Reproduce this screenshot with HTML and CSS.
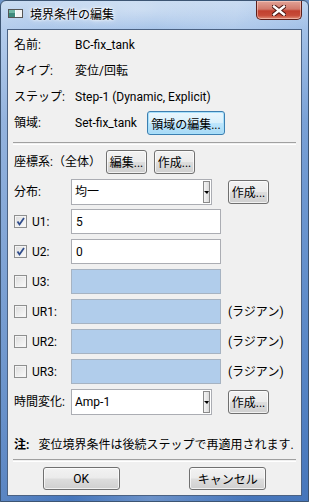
FILE: index.html
```html
<!DOCTYPE html>
<html>
<head>
  <title>境界条件の編集</title>
  <link rel="stylesheet" href="styles.css">
</head>
<body>
  <div class="window">
    <div class="titlebar">
      <svg class="app-icon" width="15" height="9" viewBox="0 0 15 9">
        <rect x="0.5" y="0.5" width="14" height="8" fill="#fff" stroke="#555"/>
        <rect x="1" y="1" width="6" height="7" fill="#3f8a7c"/>
        <rect x="1" y="1" width="6" height="3" fill="#6fb7a4"/>
        <rect x="8" y="1" width="6" height="7" fill="#f4f4f4"/>
      </svg>
      <span class="title">境界条件の編集</span>
      <div class="close-btn">
        <svg width="14" height="11" viewBox="0 0 14 11">
          <path d="M2 1.5 L12 9.5 M12 1.5 L2 9.5" stroke="#4a1612" stroke-width="4.4" stroke-linecap="square"/>
          <path d="M2 1.5 L12 9.5 M12 1.5 L2 9.5" stroke="#fff" stroke-width="2.4" stroke-linecap="square"/>
        </svg>
      </div>
    </div>

    <div class="client">
      <div class="info">
        <div class="info-row"><span class="info-label">名前:</span><span class="info-value">BC-fix_tank</span></div>
        <div class="info-row"><span class="info-label">タイプ:</span><span class="info-value">変位/回転</span></div>
        <div class="info-row"><span class="info-label">ステップ:</span><span class="info-value">Step-1 (Dynamic, Explicit)</span></div>
        <div class="info-row">
          <span class="info-label">領域:</span><span class="info-value">Set-fix_tank</span>
          <button class="btn btn-focus region-btn">領域の編集...</button>
        </div>
      </div>

      <div class="sep"></div>

      <div class="form">
        <div class="row">
          <span class="csys-label">座標系:（全体）</span>
          <button class="btn btn-small">編集...</button>
          <button class="btn btn-small csys-create">作成...</button>
        </div>
        <div class="row">
          <span class="label">分布:</span>
          <div class="combo"><span class="combo-text">均一</span><span class="combo-arrow"></span></div>
          <button class="btn btn-small side-btn">作成...</button>
        </div>
        <div class="row">
          <span class="label"><span class="check checked"></span>U1:</span>
          <div class="field">5</div>
        </div>
        <div class="row">
          <span class="label"><span class="check checked"></span>U2:</span>
          <div class="field">0</div>
        </div>
        <div class="row">
          <span class="label"><span class="check"></span>U3:</span>
          <div class="field disabled"></div>
        </div>
        <div class="row">
          <span class="label"><span class="check"></span>UR1:</span>
          <div class="field disabled"></div>
          <span class="unit">(ラジアン)</span>
        </div>
        <div class="row">
          <span class="label"><span class="check"></span>UR2:</span>
          <div class="field disabled"></div>
          <span class="unit">(ラジアン)</span>
        </div>
        <div class="row">
          <span class="label"><span class="check"></span>UR3:</span>
          <div class="field disabled"></div>
          <span class="unit">(ラジアン)</span>
        </div>
        <div class="row">
          <span class="label">時間変化:</span>
          <div class="combo"><span class="combo-text">Amp-1</span><span class="combo-arrow"></span></div>
          <button class="btn btn-small side-btn">作成...</button>
        </div>
      </div>

      <p class="note"><b>注:</b><span class="note-text">変位境界条件は後続ステップで再適用されます.</span></p>

      <div class="sep sep-bottom"></div>

      <div class="actions">
        <button class="btn btn-action">OK</button>
        <button class="btn btn-action">キャンセル</button>
      </div>
    </div>
  </div>
</body>
</html>
```

FILE: styles.css
```css
body {
  margin: 0;
  font-family: Roboto, "Noto Sans CJK JP", sans-serif;
  font-size: 12px;
  line-height: 16px;
  color: #000;
  background: #6d94c8;
}

.window {
  width: 309px;
  height: 502px;
  box-sizing: border-box;
  display: flex;
  flex-direction: column;
  border: 1px solid #3d5573;
  border-radius: 6px 6px 0 0;
  background:
    radial-gradient(ellipse 120px 30px at 140px 8px, rgba(255, 255, 255, 0.35), rgba(255, 255, 255, 0)),
    linear-gradient(100deg, rgba(255, 255, 255, 0.25) 0, rgba(255, 255, 255, 0) 40%, rgba(255, 255, 255, 0.2) 60%, rgba(255, 255, 255, 0) 85%),
    linear-gradient(to bottom, #b9d1ee 0, #9dbde6 28px, #779fd5 120px, #5987c6 350px, #4676bb 502px);
}

/* title bar */
.titlebar {
  height: 28px;
  display: flex;
  align-items: flex-start;
  padding: 0 6px 0 7px;
}

.app-icon {
  margin-top: 8px;
}

.title {
  margin: 6px 0 0 7px;
  font-size: 12px;
  text-shadow: 0 0 6px #fff, 0 0 3px #fff, 0 0 2px #fff;
}

.close-btn {
  margin-left: auto;
  width: 46px;
  height: 19px;
  box-sizing: border-box;
  border: 1px solid #5c1f1a;
  border-top: none;
  border-radius: 0 0 5px 5px;
  background: linear-gradient(to bottom, #e2a397 0, #d27a6c 45%, #c1402f 55%, #c74c39 80%, #e08e78 100%);
  box-shadow: inset 0 0 0 1px rgba(255, 220, 210, 0.5);
  display: flex;
  align-items: center;
  justify-content: center;
}

/* client area */
.client {
  flex: 1;
  margin: 0 6px 5px 6px;
  border: 1px solid #4b6283;
  background-color: #f0f0f0;
  display: flex;
  flex-direction: column;
}

.info {
  padding: 2px 0 0 6px;
}

.info-row {
  height: 26px;
  display: flex;
  align-items: center;
}

.info-label {
  width: 61px;
}

.info-value {
  white-space: nowrap;
}

.region-btn {
  margin-left: 10px;
  width: 78px;
  height: 24px;
}

.sep {
  margin: 6px 5px 0 5px;
  height: 1px;
  border-top: 1px solid #a0a0a0;
  border-bottom: 1px solid #fff;
}

.form {
  margin-top: 4px;
  padding-left: 6px;
  display: flex;
  flex-direction: column;
  gap: 5px;
}

.row {
  height: 25px;
  display: flex;
  align-items: center;
}

.label {
  width: 57px;
  display: flex;
  align-items: center;
  white-space: nowrap;
}

.csys-label {
  width: 92px;
  white-space: nowrap;
}

.csys-create {
  margin-left: 7px;
}

/* buttons */
.btn {
  font-family: inherit;
  font-size: 12px;
  color: #000;
  padding: 0;
  border: 1px solid #707070;
  border-radius: 3px;
  background: linear-gradient(to bottom, #f2f2f2 0, #ebebeb 48%, #dddddd 52%, #cfcfcf 100%);
  box-shadow: inset 0 0 0 1px rgba(255, 255, 255, 0.7);
  white-space: nowrap;
}

.btn-focus {
  border-color: #3c7fb1;
  background: linear-gradient(to bottom, #eaf6fd 0, #d9f0fc 48%, #bee6fd 52%, #a7d9f5 100%);
  box-shadow: inset 0 0 0 1px #a7e0fb;
}

.btn-small {
  width: 41px;
  height: 24px;
}

.side-btn {
  margin-left: 16px;
  height: 24px;
}

.btn-action {
  width: 77px;
  height: 23px;
}

/* inputs */
.combo {
  width: 141px;
  height: 26px;
  box-sizing: border-box;
  border: 1px solid #abadb3;
  background: #fff;
  display: flex;
  align-items: center;
  padding: 0 1px 0 3px;
}

.combo-text {
  flex: 1;
}

.combo-arrow {
  width: 7px;
  height: 22px;
  box-sizing: border-box;
  border: 1px solid #8a8a8a;
  background: linear-gradient(to right, #f4f4f4, #dcdcdc);
  display: flex;
  align-items: center;
  justify-content: center;
}

.combo-arrow::after {
  content: "";
  border-left: 3px solid transparent;
  border-right: 2px solid transparent;
  border-top: 3px solid #000;
  margin-top: 2px;
}

.field {
  width: 150px;
  height: 25px;
  box-sizing: border-box;
  border: 1px solid #abadb3;
  background: #fff;
  padding: 0 0 0 4px;
  display: flex;
  align-items: center;
}

.field.disabled {
  background: #b1cdeb;
  border-color: #a6b3c2;
}

.unit {
  margin-left: 7px;
  white-space: nowrap;
}

.check {
  width: 13px;
  height: 13px;
  box-sizing: border-box;
  margin-right: 5px;
  border: 1px solid #8e8f8f;
  background: linear-gradient(135deg, #dcdcdc, #fbfbfb);
  box-shadow: inset 0 0 0 1px #f4f4f4;
}

.check.checked {
  background:
    url("data:image/svg+xml;utf8,<svg xmlns='http://www.w3.org/2000/svg' width='11' height='11'><path d='M2.5 5.5 L4.5 8.5 L9 2' fill='none' stroke='%23304d8c' stroke-width='1.8'/></svg>") center no-repeat,
    linear-gradient(135deg, #dcdcdc, #fbfbfb);
}

/* note and actions */
.note {
  margin: 21px 0 0 6px;
  height: 20px;
  display: flex;
  align-items: center;
  white-space: nowrap;
}

.note-text {
  margin-left: 9px;
}

.sep-bottom {
  margin-top: 4px;
}

.actions {
  margin-top: 5px;
  display: grid;
  grid-template-columns: 1fr 1fr;
  justify-items: center;
}
```
